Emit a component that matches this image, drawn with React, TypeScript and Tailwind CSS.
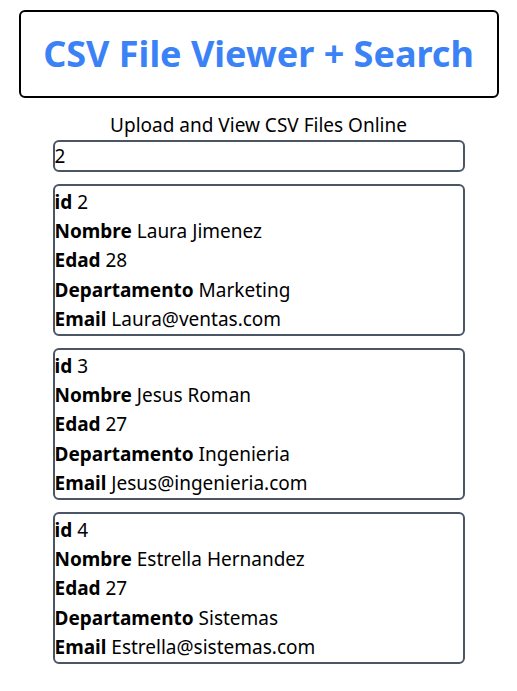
import React, { useState } from "react";

const rows = [
    { id: "2", Nombre: "Laura Jimenez", Edad: "28", Departamento: "Marketing", Email: "Laura@ventas.com" },
    { id: "3", Nombre: "Jesus Roman", Edad: "27", Departamento: "Ingenieria", Email: "Jesus@ingenieria.com" },
    { id: "4", Nombre: "Estrella Hernandez", Edad: "27", Departamento: "Sistemas", Email: "Estrella@sistemas.com" },
];

export default function App() {
    const [query, setQuery] = useState("2");

    return (
        <div className="min-h-screen bg-white text-black font-['Noto_Sans',sans-serif] flex flex-col items-center pt-[10px]">
            <div className="w-[480px] h-[88px] border-2 border-black rounded-md flex items-center justify-center">
                <h1 className="text-[#3b82f6] text-[36px] font-bold leading-none">CSV File Viewer + Search</h1>
            </div>

            <p className="mt-[15px] text-[19px] leading-[24px]">Upload and View CSV Files Online</p>

            <input
                type="text"
                value={query}
                onChange={(e) => setQuery(e.target.value)}
                className="mt-[3px] w-[412px] h-[32px] border-2 border-gray-600 rounded-md px-0 text-[19px] outline-none"
            />

            <div className="mt-[12px] flex flex-col gap-[12px]">
                {rows.map((r) => (
                    <div key={r.id} className="w-[412px] pt-[2px] border-2 border-gray-600 rounded-md text-[19px]">
                        {Object.entries(r).map(([k, v]) => (
                            <p key={k} className="leading-[29.2px]">
                                <span className="font-bold">{k}</span> {v}
                            </p>
                        ))}
                    </div>
                ))}
            </div>
        </div>
    );
}
